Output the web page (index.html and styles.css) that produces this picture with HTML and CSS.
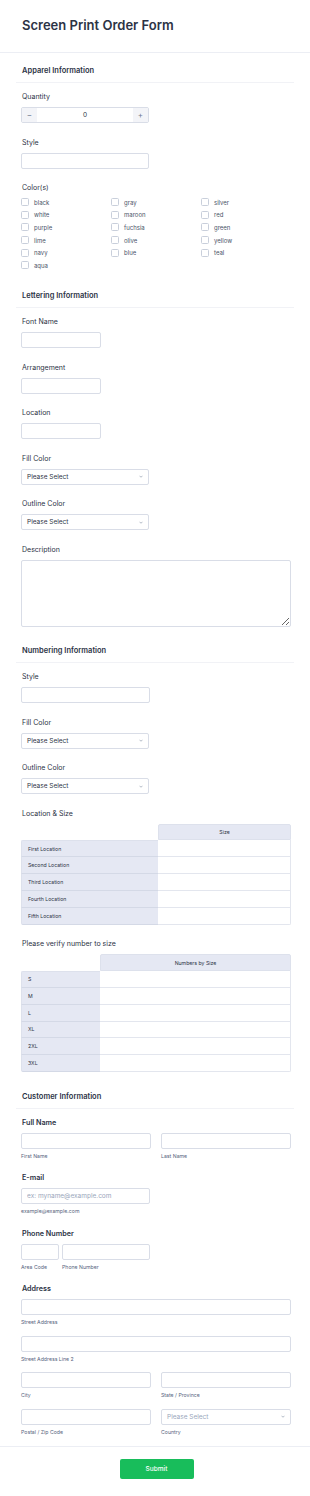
FILE: index.html
```html
<!DOCTYPE html>
<html lang="en">
<head>
<meta charset="utf-8">
<title>Screen Print Order Form</title>
<link rel="stylesheet" href="styles.css">
</head>
<body>
<header class="form-header">
  <h1 class="form-title">Screen Print Order Form</h1>
</header>

<main class="form-body">
  <section class="section">
    <div class="section-head"><h2 class="section-title">Apparel Information</h2></div>

    <div class="field">
      <span class="label">Quantity</span>
      <div class="spinner w-128">
        <span class="spin-btn">&minus;</span>
        <span class="spin-value">0</span>
        <span class="spin-btn">+</span>
      </div>
    </div>

    <div class="field">
      <span class="label">Style</span>
      <input class="input w-128" type="text">
    </div>

    <div class="field">
      <span class="label">Color(s)</span>
      <div class="checks">
        <label class="check"><span class="box"></span>black</label>
        <label class="check"><span class="box"></span>gray</label>
        <label class="check"><span class="box"></span>silver</label>
        <label class="check"><span class="box"></span>white</label>
        <label class="check"><span class="box"></span>maroon</label>
        <label class="check"><span class="box"></span>red</label>
        <label class="check"><span class="box"></span>purple</label>
        <label class="check"><span class="box"></span>fuchsia</label>
        <label class="check"><span class="box"></span>green</label>
        <label class="check"><span class="box"></span>lime</label>
        <label class="check"><span class="box"></span>olive</label>
        <label class="check"><span class="box"></span>yellow</label>
        <label class="check"><span class="box"></span>navy</label>
        <label class="check"><span class="box"></span>blue</label>
        <label class="check"><span class="box"></span>teal</label>
        <label class="check"><span class="box"></span>aqua</label>
      </div>
    </div>
  </section>

  <section class="section">
    <div class="section-head"><h2 class="section-title">Lettering Information</h2></div>

    <div class="field">
      <span class="label">Font Name</span>
      <input class="input w-80" type="text">
    </div>
    <div class="field">
      <span class="label">Arrangement</span>
      <input class="input w-80" type="text">
    </div>
    <div class="field">
      <span class="label">Location</span>
      <input class="input w-80" type="text">
    </div>
    <div class="field">
      <span class="label">Fill Color</span>
      <div class="select w-128"><span>Please Select</span><svg class="chev" viewBox="0 0 8 5"><path d="M1 1l3 3 3-3"/></svg></div>
    </div>
    <div class="field">
      <span class="label">Outline Color</span>
      <div class="select w-128"><span>Please Select</span><svg class="chev" viewBox="0 0 8 5"><path d="M1 1l3 3 3-3"/></svg></div>
    </div>
    <div class="field">
      <span class="label">Description</span>
      <textarea class="textarea"></textarea>
    </div>
  </section>

  <section class="section">
    <div class="section-head"><h2 class="section-title">Numbering Information</h2></div>

    <div class="field">
      <span class="label">Style</span>
      <input class="input w-129" type="text">
    </div>
    <div class="field">
      <span class="label">Fill Color</span>
      <div class="select w-128"><span>Please Select</span><svg class="chev" viewBox="0 0 8 5"><path d="M1 1l3 3 3-3"/></svg></div>
    </div>
    <div class="field">
      <span class="label">Outline Color</span>
      <div class="select w-128"><span>Please Select</span><svg class="chev" viewBox="0 0 8 5"><path d="M1 1l3 3 3-3"/></svg></div>
    </div>

    <div class="field">
      <span class="label">Location &amp; Size</span>
      <div class="matrix matrix-loc">
        <div class="m-corner"></div>
        <div class="m-head">Size</div>
        <div class="m-row">First Location</div><div class="m-cell"></div>
        <div class="m-row">Second Location</div><div class="m-cell"></div>
        <div class="m-row">Third Location</div><div class="m-cell"></div>
        <div class="m-row">Fourth Location</div><div class="m-cell"></div>
        <div class="m-row m-last">Fifth Location</div><div class="m-cell m-last"></div>
      </div>
    </div>

    <div class="field">
      <span class="label">Please verify number to size</span>
      <div class="matrix matrix-size">
        <div class="m-corner"></div>
        <div class="m-head">Numbers by Size</div>
        <div class="m-row">S</div><div class="m-cell"></div>
        <div class="m-row">M</div><div class="m-cell"></div>
        <div class="m-row">L</div><div class="m-cell"></div>
        <div class="m-row">XL</div><div class="m-cell"></div>
        <div class="m-row">2XL</div><div class="m-cell"></div>
        <div class="m-row m-last">3XL</div><div class="m-cell m-last"></div>
      </div>
    </div>
  </section>

  <section class="section section-last">
    <div class="section-head"><h2 class="section-title">Customer Information</h2></div>

    <div class="field">
      <span class="label label-strong">Full Name</span>
      <div class="row2">
        <div><input class="input" type="text"><span class="sublabel">First Name</span></div>
        <div><input class="input" type="text"><span class="sublabel">Last Name</span></div>
      </div>
    </div>

    <div class="field field-sub">
      <span class="label label-strong">E-mail</span>
      <input class="input w-129 input-ph" type="email" placeholder="ex: myname@example.com">
      <span class="sublabel">example@example.com</span>
    </div>

    <div class="field field-sub">
      <span class="label label-strong">Phone Number</span>
      <div class="phone">
        <div><input class="input" type="text"><span class="sublabel">Area Code</span></div>
        <div><input class="input" type="text"><span class="sublabel">Phone Number</span></div>
      </div>
    </div>

    <div class="field field-sub">
      <span class="label label-strong">Address</span>
      <div class="address">
        <div class="span2"><input class="input" type="text"><span class="sublabel">Street Address</span></div>
        <div class="span2"><input class="input" type="text"><span class="sublabel">Street Address Line 2</span></div>
        <div><input class="input" type="text"><span class="sublabel">City</span></div>
        <div><input class="input" type="text"><span class="sublabel">State / Province</span></div>
        <div><input class="input" type="text"><span class="sublabel">Postal / Zip Code</span></div>
        <div>
          <div class="select select-muted"><span>Please Select</span><svg class="chev" viewBox="0 0 8 5"><path d="M1 1l3 3 3-3"/></svg></div>
          <span class="sublabel">Country</span>
        </div>
      </div>
    </div>
  </section>
</main>

<footer class="form-footer">
  <button class="submit" type="button">Submit</button>
</footer>
</body>
</html>
```

FILE: styles.css
```css
* {
  box-sizing: border-box;
  margin: 0;
  padding: 0;
}

body {
  width: 310px;
  background: #ffffff;
  color: #2c3345;
  font-family: Inter, "Noto Sans", sans-serif;
}

.form-header {
  height: 53px;
  padding: 16px 0 0 22px;
  border-bottom: 1px solid #eceef4;
}

.form-title {
  font-size: 13px;
  font-weight: 600;
  line-height: 18px;
  color: #2c3345;
}

.form-body {
  padding: 0 16px;
}

.section + .section {
  margin-top: 6.5px;
}

.section-last {
  margin-top: 5.5px;
}

.section-head {
  padding: 13px 6px 6px;
  border-bottom: 1px solid #f1f2f6;
  margin-bottom: 9px;
}

.section-title {
  font-size: 7.5px;
  font-weight: 600;
  line-height: 10px;
  color: #2c3345;
}

.field {
  padding: 0 3px 0 5px;
}

.field + .field {
  margin-top: 14.5px;
}

.field + .field-sub {
  margin-top: 13.5px;
}

.label {
  display: block;
  padding-left: 1px;
  font-size: 7px;
  font-weight: 400;
  line-height: 10px;
  margin-bottom: 5px;
  color: #2c3345;
}

.label-strong {
  font-weight: 600;
  font-size: 7.2px;
}

.input {
  display: block;
  width: 100%;
  height: 16px;
  border: 1px solid #d9dde7;
  border-radius: 2px;
  background: #ffffff;
  font-family: inherit;
  outline: none;
}

.input-ph {
  padding: 0 5px;
  font-size: 6.5px;
}

.input-ph::placeholder {
  color: #9aa6bb;
}

.w-80 { width: 80px; }
.w-128 { width: 128px; }
.w-129 { width: 129px; }

/* spinner */
.spinner {
  display: flex;
  height: 16px;
  border: 1px solid #d9dde7;
  border-radius: 2px;
  overflow: hidden;
}

.spin-btn {
  width: 15px;
  flex: none;
  display: flex;
  align-items: center;
  justify-content: center;
  background: #f3f4f8;
  color: #6f7a90;
  font-size: 8px;
  line-height: 1;
}

.spin-value {
  flex: 1;
  display: flex;
  align-items: center;
  justify-content: center;
  font-size: 6.5px;
  color: #2c3345;
}

/* checkboxes */
.checks {
  margin-top: -2px;
  display: grid;
  grid-template-columns: 90px 90px 90px;
  grid-auto-rows: 12.6px;
}

.check {
  display: flex;
  align-items: center;
  gap: 5px;
  font-size: 6px;
  color: #4a5468;
}

.box {
  width: 8px;
  height: 8px;
  border: 1px solid #c9cfdb;
  border-radius: 1.5px;
  background: #ffffff;
  flex: none;
}

/* select */
.select {
  display: flex;
  align-items: center;
  justify-content: space-between;
  height: 16px;
  padding: 0 5px 0 5px;
  border: 1px solid #d9dde7;
  border-radius: 2px;
  font-size: 6.5px;
  color: #2c3345;
}

.chev {
  width: 4px;
  height: 3px;
  fill: none;
  stroke: #8a94a8;
  stroke-width: 1.3;
}

.select-muted {
  color: #9aa6bb;
}

.textarea {
  display: block;
  width: 100%;
  height: 67px;
  border: 1px solid #d9dde7;
  border-radius: 2px;
  resize: vertical;
  outline: none;
  font-family: inherit;
}

/* matrices */
.matrix {
  display: grid;
  grid-auto-rows: 16.85px;
  font-size: 5.2px;
  color: #2c3345;
}

.matrix-loc {
  grid-template-columns: 137px 1fr;
}

.matrix-size {
  grid-template-columns: 79px 1fr;
}

.m-head {
  display: flex;
  align-items: center;
  justify-content: center;
  background: #e5e8f3;
  border: 1px solid #dde1ec;
  border-radius: 2px 2px 0 0;
}

.m-row {
  display: flex;
  align-items: center;
  padding-left: 6px;
  background: #e5e8f3;
  border-left: 1px solid #dde1ec;
  border-bottom: 1px solid #d4d9e6;
}

.m-cell {
  background: #ffffff;
  border-right: 1px solid #e3e6ee;
  border-bottom: 1px solid #e3e6ee;
}

.matrix .m-row:nth-child(3) {
  border-top: 1px solid #dde1ec;
  border-top-left-radius: 2px;
}

.m-row.m-last {
  border-bottom-left-radius: 2px;
}

.m-cell.m-last {
  border-bottom-right-radius: 2px;
}

/* customer info */
.row2,
.address {
  display: grid;
  grid-template-columns: 130px 130px;
  column-gap: 10px;
}

.address {
  row-gap: 9.5px;
}

.span2 {
  grid-column: 1 / 3;
}

.phone {
  display: grid;
  grid-template-columns: 38px 88px;
  column-gap: 3px;
}

.sublabel {
  display: block;
  margin-top: 4px;
  font-size: 5.2px;
  line-height: 7px;
  color: #57647e;
}

/* footer */
.form-footer {
  margin-top: 10px;
  border-top: 1px solid #eceef4;
  padding: 12px 0 17px;
  display: flex;
  justify-content: center;
}

.submit {
  width: 74px;
  height: 20px;
  margin-left: 3px;
  border: none;
  border-radius: 2px;
  background: #18bd5b;
  color: #ffffff;
  font-family: inherit;
  font-size: 6.5px;
  font-weight: 500;
}
```
